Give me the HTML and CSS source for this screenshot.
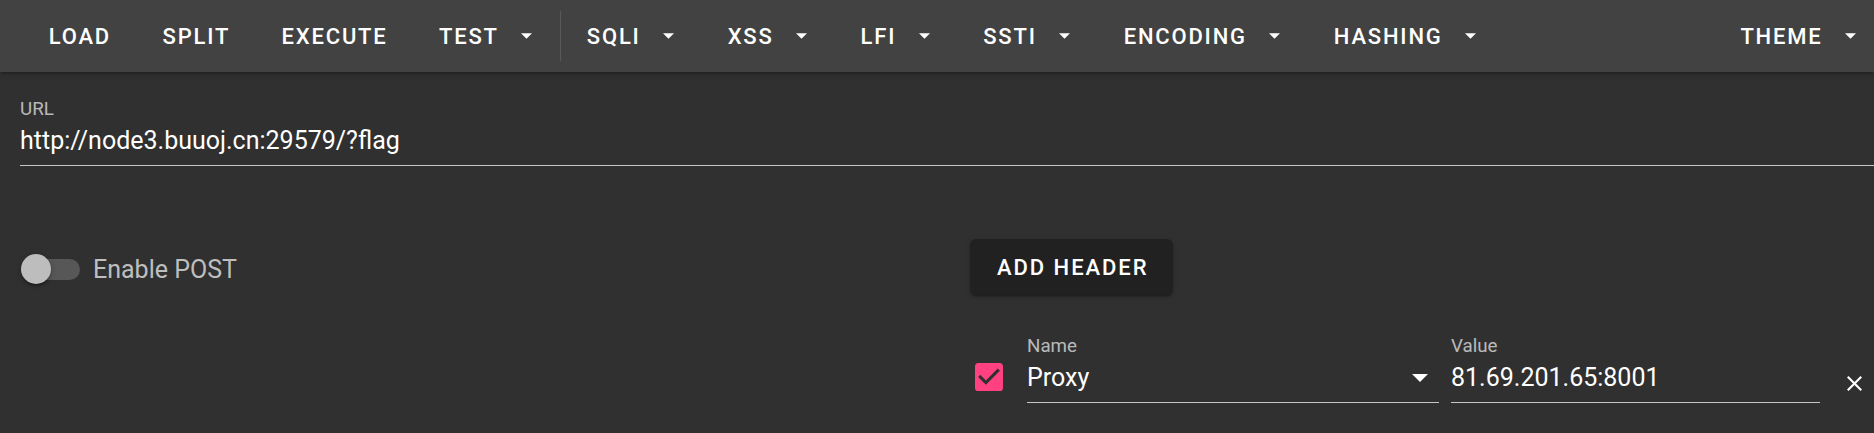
FILE: index.html
```html
<!DOCTYPE html>
<html lang="en">
<head>
<meta charset="utf-8">
<title>HackBar</title>
<link rel="stylesheet" href="styles.css">
</head>
<body>
<header class="toolbar">
  <button class="tb-btn">LOAD</button>
  <button class="tb-btn">SPLIT</button>
  <button class="tb-btn">EXECUTE</button>
  <button class="tb-btn">TEST<svg class="tb-caret" viewBox="7 10 10 5"><path d="M7,10L12,15L17,10H7Z"/></svg></button>
  <span class="tb-divider"></span>
  <button class="tb-btn">SQLI<svg class="tb-caret" viewBox="7 10 10 5"><path d="M7,10L12,15L17,10H7Z"/></svg></button>
  <button class="tb-btn">XSS<svg class="tb-caret" viewBox="7 10 10 5"><path d="M7,10L12,15L17,10H7Z"/></svg></button>
  <button class="tb-btn">LFI<svg class="tb-caret" viewBox="7 10 10 5"><path d="M7,10L12,15L17,10H7Z"/></svg></button>
  <button class="tb-btn">SSTI<svg class="tb-caret" viewBox="7 10 10 5"><path d="M7,10L12,15L17,10H7Z"/></svg></button>
  <button class="tb-btn">ENCODING<svg class="tb-caret" viewBox="7 10 10 5"><path d="M7,10L12,15L17,10H7Z"/></svg></button>
  <button class="tb-btn">HASHING<svg class="tb-caret" viewBox="7 10 10 5"><path d="M7,10L12,15L17,10H7Z"/></svg></button>
  <span class="tb-spacer"></span>
  <button class="tb-btn tb-btn--last">THEME<svg class="tb-caret" viewBox="7 10 10 5"><path d="M7,10L12,15L17,10H7Z"/></svg></button>
</header>

<main class="content">
  <div class="field field--url">
    <div class="field-label">URL</div>
    <div class="field-input">http://node3.buuoj.cn:29579/?flag</div>
  </div>

  <div class="columns">
    <div class="col col--left">
      <div class="switch">
        <span class="switch-control">
          <span class="switch-track"></span>
          <span class="switch-thumb"></span>
        </span>
        <span class="switch-label">Enable POST</span>
      </div>
    </div>
    <div class="col col--right">
      <button class="btn-raised">ADD HEADER</button>
      <div class="header-row">
        <svg class="checkbox" viewBox="3 3 18 18"><path d="M10,17L5,12L6.41,10.58L10,14.17L17.59,6.58L19,8M19,3H5C3.89,3 3,3.89 3,5V19A2,2 0 0,0 5,21H19A2,2 0 0,0 21,19V5C21,3.89 20.1,3 19,3Z"/></svg>
        <div class="field field--name">
          <div class="field-label">Name</div>
          <div class="field-input field-input--select">
            <span>Proxy</span>
            <svg class="select-caret" viewBox="7 10 10 5"><path d="M7,10L12,15L17,10H7Z"/></svg>
          </div>
        </div>
        <div class="field field--value">
          <div class="field-label">Value</div>
          <div class="field-input">81.69.201.65:8001</div>
        </div>
        <svg class="close-icon" viewBox="5 5 14 14"><path d="M19,6.41L17.59,5L12,10.59L6.41,5L5,6.41L10.59,12L5,17.59L6.41,19L12,13.41L17.59,19L19,17.59L13.41,12L19,6.41Z"/></svg>
      </div>
    </div>
  </div>
</main>
</body>
</html>
```

FILE: styles.css
```css
* { box-sizing: border-box; }

html, body {
  margin: 0;
  padding: 0;
  background: #303030;
  color: #ffffff;
  font-family: Roboto, "Liberation Sans", sans-serif;
  overflow: hidden;
}

body {
  width: 1874px;
  height: 433px;
}

/* ---------- toolbar ---------- */
.toolbar {
  display: flex;
  align-items: center;
  height: 72px;
  padding-left: 23px;
  background: #424242;
  box-shadow: 0 3px 2px -2px rgba(0,0,0,0.25), 0 2px 6px 0 rgba(0,0,0,0.18);
  position: relative;
  z-index: 1;
}

.tb-btn {
  display: flex;
  align-items: center;
  height: 72px;
  padding: 0 25.75px;
  margin: 0;
  border: 0;
  background: transparent;
  color: #ffffff;
  font-family: Roboto, "Liberation Sans", sans-serif;
  font-size: 22px;
  font-weight: 500;
  letter-spacing: 1.8px;
  text-transform: uppercase;
  cursor: pointer;
}

.tb-btn--last {
  padding-right: 16px;
}

.tb-caret {
  width: 15px;
  height: 6px;
  margin-left: 20.5px;
  padding: 0 2px;
  fill: #ffffff;
}

.tb-divider {
  width: 1px;
  height: 50px;
  background: rgba(255,255,255,0.12);
}

.tb-spacer {
  flex: 1;
}

/* ---------- content ---------- */
.content {
  padding: 0 0 0 20px;
}

.field-label {
  font-size: 18.75px;
  line-height: 18px;
  color: rgba(255,255,255,0.68);
}

.field-input {
  margin-top: 5px;
  font-size: 25px;
  line-height: 36px;
  padding-bottom: 6px;
  border-bottom: 1px solid #c6c6c6;
  color: #ffffff;
}

.field--url {
  padding-top: 28px;
}

.columns {
  display: grid;
  grid-template-columns: 1fr 1fr;
}

.col--left {
  padding-top: 88px;
}

.col--right {
  padding-top: 73px;
  padding-left: 23px;
}

/* switch */
.switch {
  display: flex;
  align-items: center;
}

.switch-control {
  position: relative;
  display: block;
  width: 59px;
  height: 30px;
  margin-left: 1px;
}

.switch-track {
  position: absolute;
  left: 4px;
  right: 0;
  top: 5px;
  height: 21px;
  border-radius: 11px;
  background: #575757;
}

.switch-thumb {
  position: absolute;
  left: 0;
  top: 0;
  width: 30px;
  height: 30px;
  border-radius: 50%;
  background: #bdbdbd;
  box-shadow: 0 3px 2px -2px rgba(0,0,0,0.3), 0 2px 3px 0 rgba(0,0,0,0.2), 0 1px 7px 0 rgba(0,0,0,0.15);
}

.switch-label {
  margin-left: 13px;
  font-size: 25px;
  color: rgba(255,255,255,0.7);
}

/* raised button */
.btn-raised {
  display: block;
  height: 56px;
  padding: 0 24px 0 27px;
  border: 0;
  border-radius: 6px;
  background: #212121;
  color: #ffffff;
  font-family: Roboto, "Liberation Sans", sans-serif;
  font-size: 22px;
  font-weight: 500;
  letter-spacing: 1.95px;
  box-shadow: 0 3px 1px -2px rgba(0,0,0,0.2), 0 2px 2px 0 rgba(0,0,0,0.14), 0 1px 5px 0 rgba(0,0,0,0.12);
}

/* header row */
.header-row {
  display: flex;
  align-items: flex-start;
  margin-top: 42px;
}

.checkbox {
  width: 28px;
  height: 28px;
  margin: 26px 0 0 5px;
  fill: #ff4081;
}

.field--name {
  width: 412px;
  margin-left: 24px;
}

.field--value {
  width: 369px;
  margin-left: 12px;
}

.field-input--select {
  display: flex;
  align-items: center;
  justify-content: space-between;
}

.select-caret {
  width: 16px;
  height: 8px;
  margin-right: 11px;
  fill: #ffffff;
}

.close-icon {
  width: 15px;
  height: 15px;
  margin: 39px 0 0 27px;
  fill: #ffffff;
}
```
